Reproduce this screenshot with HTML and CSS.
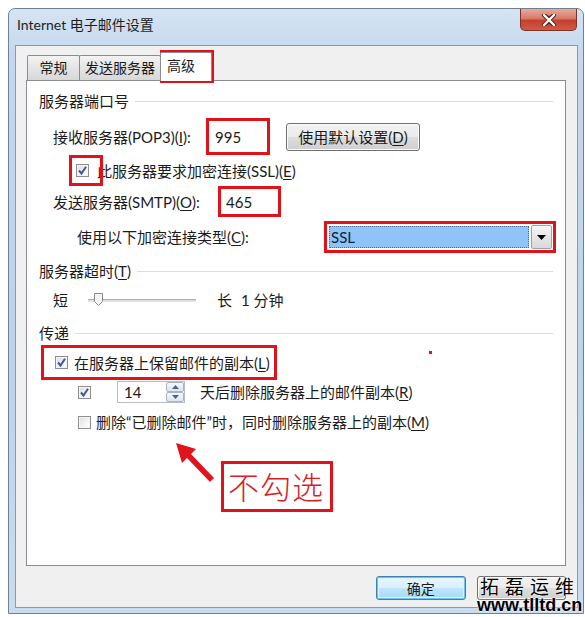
FILE: index.html
```html
<!DOCTYPE html>
<html lang="zh-CN">
<head>
<meta charset="utf-8">
<title>Internet 电子邮件设置</title>
<link rel="stylesheet" href="styles.css">
</head>
<body>
<div class="window">
  <div class="titlebar">
    <span class="title">Internet 电子邮件设置</span>
    <div class="close">
      <svg width="16" height="12" viewBox="0 0 16 12"><path d="M3 1 L8 5 L13 1 M3 11 L8 7 L13 11 M3 1 L13 11 M13 1 L3 11" stroke="#5a1f18" stroke-width="4.2" stroke-linecap="round" fill="none"/><path d="M3 1 L13 11 M13 1 L3 11" stroke="#ffffff" stroke-width="2.4" stroke-linecap="round" fill="none"/></svg>
    </div>
  </div>
  <div class="client">
    <div class="tabs">
      <div class="tab t-general">常规</div>
      <div class="tab t-send">发送服务器</div>
      <div class="tab active">高级</div>
    </div>
    <div class="panel">
      <div class="group g1"><span>服务器端口号</span><i class="rule"></i></div>
      <div class="row r-pop">
        <span class="lbl lbl-pop">接收服务器(POP3)(<u>I</u>):</span>
        <span class="field redbox f-pop">995</span>
        <span class="btn btn-default">使用默认设置(<u>D</u>)</span>
      </div>
      <div class="row r-ssl">
        <span class="cb checked"><svg width="11" height="11" viewBox="0 0 11 11"><path d="M2 5.5 L4.5 8.5 L9 1.8" stroke="#3e56a3" stroke-width="2" fill="none"/></svg></span>
        <span class="lbl">此服务器要求加密连接(SSL)(<u>E</u>)</span>
      </div>
      <div class="row r-smtp">
        <span class="lbl lbl-smtp">发送服务器(SMTP)(<u>O</u>):</span>
        <span class="field redbox f-smtp">465</span>
      </div>
      <div class="row r-enc">
        <span class="lbl lbl-enc">使用以下加密连接类型(<u>C</u>):</span>
        <span class="combo redbox">
          <span class="combo-val">SSL</span>
          <span class="combo-btn"><svg width="9" height="5" viewBox="0 0 9 5"><path d="M0 0 H9 L4.5 5 Z" fill="#000"/></svg></span>
        </span>
      </div>
      <div class="group g2"><span>服务器超时(<u>T</u>)</span><i class="rule"></i></div>
      <div class="row r-slider">
        <span class="lbl">短</span>
        <span class="slider"><i class="track"></i><svg class="thumb" width="9" height="13" viewBox="0 0 9 13"><path d="M0.5 0.5 H8.5 V8.5 L4.5 12.5 L0.5 8.5 Z" fill="#f4f4f4" stroke="#8a8a8a"/></svg></span>
        <span class="lbl long">长</span>
        <span class="lbl minute">1 分钟</span>
      </div>
      <div class="group g3"><span>传递</span><i class="rule"></i></div>
      <div class="row r-keep redbox">
        <span class="cb checked"><svg width="11" height="11" viewBox="0 0 11 11"><path d="M2 5.5 L4.5 8.5 L9 1.8" stroke="#3e56a3" stroke-width="2" fill="none"/></svg></span>
        <span class="lbl">在服务器上保留邮件的副本(<u>L</u>)</span>
      </div>
      <div class="row r-days">
        <span class="cb checked"><svg width="11" height="11" viewBox="0 0 11 11"><path d="M2 5.5 L4.5 8.5 L9 1.8" stroke="#3e56a3" stroke-width="2" fill="none"/></svg></span>
        <span class="spin">
          <span class="spin-val">14</span>
          <span class="spin-btns">
            <span class="sb"><svg width="7" height="4" viewBox="0 0 7 4"><path d="M0 4 L3.5 0 L7 4 Z" fill="#4d6185"/></svg></span>
            <span class="sb"><svg width="7" height="4" viewBox="0 0 7 4"><path d="M0 0 H7 L3.5 4 Z" fill="#4d6185"/></svg></span>
          </span>
        </span>
        <span class="lbl">天后删除服务器上的邮件副本(<u>R</u>)</span>
      </div>
      <div class="row r-del">
        <span class="cb"></span>
        <span class="lbl">删除“已删除邮件”时，同时删除服务器上的副本(<u>M</u>)</span>
      </div>
    </div>
    <div class="footer">
      <span class="btn btn-ok">确定</span>
      <span class="btn btn-cancel"></span>
    </div>
  </div>
</div>

<div class="anno-box anno-tab"></div>
<div class="anno-box anno-cb"></div>
<div class="anno-dot"></div>
<svg class="anno-arrow" width="50" height="42" viewBox="0 0 50 42"><path d="M2 1 L8 21 L13 16 L36 40 L40 36 L17 12 L22 7 Z" fill="#e0141c"/></svg>
<div class="anno-note">不勾选</div>
<div class="wm">
  <div class="wm-cn">拓磊运维</div>
  <div class="wm-url">www.tlltd.cn</div>
</div>
</body>
</html>
```
FILE: styles.css
```css
* { box-sizing: border-box; }
html, body { margin: 0; padding: 0; }
body {
  width: 585px;
  height: 617px;
  background: #ffffff;
  position: relative;
  overflow: hidden;
  font-family: "Lato", "Noto Sans CJK SC", sans-serif;
  font-size: 15px;
  color: #1b1b1b;
}
u { text-decoration: underline; text-underline-offset: 2px; }

.window {
  margin: 8px 0 0 8px;
  width: 576px;
  height: 606px;
  border: 1px solid #6f8093;
  border-radius: 7px 7px 0 0;
  background: linear-gradient(180deg, #d6e4f3 0%, #c3d7ee 8%, #bcd3ec 60%, #c9dcf0 100%);
  display: flex;
  flex-direction: column;
}
.titlebar {
  height: 36px;
  display: flex;
  justify-content: space-between;
  align-items: flex-start;
}
.title {
  padding: 6px 0 0 8px;
  font-size: 14px;
  line-height: 20px;
  color: #1e1e1e;
}
.close {
  width: 57px;
  height: 22px;
  margin-right: 6px;
  border: 1px solid #7b3328;
  border-top: none;
  border-radius: 0 0 5px 5px;
  background: linear-gradient(180deg, #e9a99a 0%, #d77a66 45%, #c4402f 55%, #cf5a45 100%);
  display: flex;
  align-items: center;
  justify-content: center;
}

.client {
  margin: 0 5px 5px 6px;
  flex: 1;
  background: #f0f0f0;
  border: 1px solid #8b9aab;
  padding: 6px 11px 0 10px;
  display: flex;
  flex-direction: column;
}
.tabs {
  display: flex;
  align-items: flex-end;
  margin-left: 1px;
  height: 28px;
  position: relative;
  z-index: 1;
}
.tab {
  height: 25px;
  border: 1px solid #898c95;
  border-bottom: none;
  border-radius: 2px 2px 0 0;
  background: linear-gradient(180deg, #f3f3f3 0%, #e4e4e4 50%, #d8d8d8 100%);
  font-size: 14px;
  line-height: 23px;
  text-align: center;
  margin-right: -1px;
}
.t-general { width: 53px; }
.t-send { width: 82px; }
.tab.active {
  width: 52px;
  height: 29px;
  background: #ffffff;
  margin-bottom: -1px;
  line-height: 25px;
  text-align: left;
  padding-left: 6px;
}

.panel {
  height: 486px;
  background: #ffffff;
  border: 1px solid #898c95;
  display: flex;
  flex-direction: column;
}

.group {
  display: flex;
  align-items: center;
  height: 20px;
  line-height: 20px;
  padding: 0 12px 0 12px;
}
.group .rule {
  flex: 1;
  height: 1px;
  background: #d5dfe5;
  margin-left: 6px;
}
.g1 { margin-top: 10px; }
.g2 { margin-top: 8px; }
.g3 { margin-top: 13px; }

.row {
  display: flex;
  align-items: center;
  line-height: 20px;
  white-space: nowrap;
}
.r-pop { margin-top: 7px; height: 37px; padding-left: 26px; }
.lbl-pop { width: 153px; }
.f-pop { width: 64px; height: 37px; padding-left: 6px; }
.btn-default { margin-left: 16px; width: 134px; height: 28px; }

.redbox { border: 3px solid #e2121b; }
.field {
  display: flex;
  align-items: center;
  background: #ffffff;
  font-size: 15px;
}

.r-ssl { height: 31px; padding-left: 49px; }
.r-ssl .cb { margin-right: 8px; }

.r-smtp { height: 31px; padding-left: 26px; }
.lbl-smtp { width: 165px; }
.f-smtp { width: 63px; height: 31px; padding-left: 5px; }

.r-enc { margin-top: 4px; height: 32px; padding-left: 50px; }
.lbl-enc { width: 247px; }
.combo {
  width: 232px;
  height: 32px;
  display: flex;
  align-items: center;
  padding: 1px 1px 1px 1px;
  background: #ffffff;
}
.combo-val {
  flex: 1;
  height: 22px;
  margin-left: 1px;
  background: #8ec4f8;
  outline: 1px dotted #4a6a90;
  outline-offset: -1px;
  line-height: 22px;
  padding-left: 2px;
  color: #10233a;
}
.combo-btn {
  width: 21px;
  height: 24px;
  margin-left: 2px;
  border: 1px solid #a3a3a3;
  border-radius: 2px;
  background: linear-gradient(180deg, #f6f6f6 0%, #e6e6e6 50%, #d9d9d9 100%);
  display: flex;
  align-items: center;
  justify-content: center;
}

.r-slider { margin-top: 9px; height: 20px; padding-left: 26px; }
.slider {
  width: 108px;
  height: 20px;
  margin-left: 20px;
  position: relative;
  display: flex;
  align-items: center;
}
.slider .track {
  width: 100%;
  height: 3px;
  border-top: 1px solid #b0b0b0;
  border-bottom: 1px solid #e6e6e6;
  background: #dcdcdc;
}
.slider .thumb { position: absolute; left: 6px; top: 3px; }
.long { margin-left: 21px; }
.minute { margin-left: 9px; }

.r-keep {
  margin: 2px 0 0 14px;
  width: 236px;
  height: 35px;
  padding-left: 11px;
}
.r-keep .cb { margin-right: 6px; }

.r-days { margin-top: 1px; height: 22px; padding-left: 51px; }
.spin {
  margin-left: 26px;
  width: 68px;
  height: 22px;
  border: 1px solid #b9bcc4;
  display: flex;
  align-items: stretch;
  background: #fff;
}
.spin-val { flex: 1; padding-left: 6px; line-height: 20px; }
.spin-btns {
  width: 18px;
  display: flex;
  flex-direction: column;
}
.sb {
  flex: 1;
  border: 1px solid #a9b3c4;
  border-radius: 2px;
  background: linear-gradient(180deg, #f6f8fb, #dde4ee);
  display: flex;
  align-items: center;
  justify-content: center;
}
.r-days .lbl { margin-left: 15px; }

.r-del { margin-top: 8px; height: 22px; padding-left: 51px; }
.r-del .cb { margin-right: 5px; }

.cb {
  width: 13px;
  height: 13px;
  border: 1px solid #8f8f8f;
  background: linear-gradient(135deg, #dcdcdc 0%, #f4f4f4 60%, #ffffff 100%);
  box-shadow: inset 0 0 0 1px #f4f4f4;
  display: inline-flex;
  align-items: center;
  justify-content: center;
  flex: none;
}

.btn {
  display: inline-flex;
  align-items: center;
  justify-content: center;
  border: 1px solid #707070;
  border-radius: 3px;
  background: linear-gradient(180deg, #f2f2f2 0%, #ebebeb 50%, #dddddd 51%, #cfcfcf 100%);
  box-shadow: inset 0 0 0 1px #fbfbfb;
  color: #1b1b1b;
}

.footer {
  display: flex;
  padding: 10px 0 0 350px;
  gap: 11px;
}
.btn-ok, .btn-cancel { width: 90px; height: 24px; font-size: 14px; }
.btn-ok {
  border-color: #3c7fb1;
  background: linear-gradient(180deg, #eaf6fd 0%, #d9f0fc 50%, #bee6fd 51%, #a7d9f5 100%);
  box-shadow: inset 0 0 0 1px #6ac4ef, inset 0 0 0 2px #ddf2fc;
}

/* annotations overlaying the screenshot */
.anno-box {
  position: absolute;
  border: 3px solid #e2121b;
}
.anno-tab { left: 160px; top: 50px; width: 54px; height: 33px; }
.anno-cb { left: 69px; top: 155px; width: 34px; height: 31px; }
.anno-dot {
  position: absolute;
  left: 429px; top: 351px;
  width: 3px; height: 3px;
  background: #e2121b;
}
.anno-arrow { position: absolute; left: 174px; top: 442px; }
.anno-note {
  position: absolute;
  left: 221px; top: 461px;
  width: 112px; height: 51px;
  border: 3px solid #e2121b;
  color: #d81e24;
  font-family: "Noto Sans CJK SC", sans-serif;
  font-size: 31px;
  font-weight: 300;
  line-height: 44px;
  padding-left: 4px;
  letter-spacing: 1px;
}
.wm {
  position: absolute;
  left: 477px; top: 576px;
  color: #000;
  text-shadow: 0 0 2px #fff, 0 0 2px #fff;
}
.wm-cn {
  font-family: "Noto Sans CJK SC", sans-serif;
  font-size: 19px;
  line-height: 20px;
  letter-spacing: 6px;
  padding-left: 3px;
}
.wm-url {
  font-family: "Liberation Sans", sans-serif;
  font-weight: bold;
  font-size: 18px;
  line-height: 18px;
}
```
